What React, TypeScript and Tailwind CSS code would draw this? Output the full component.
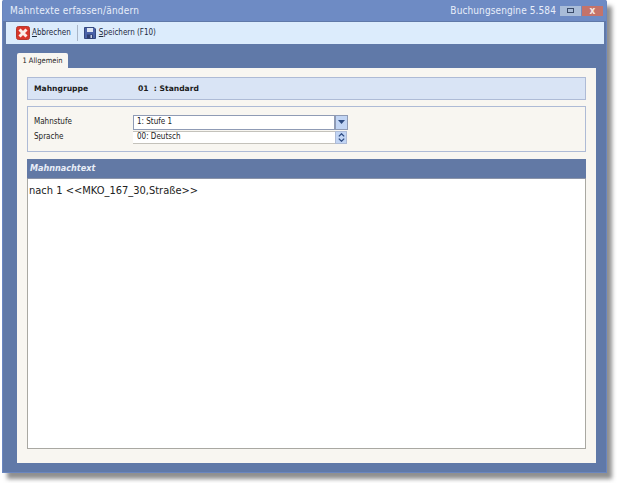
const tahoma = { fontFamily: '"DejaVu Sans Condensed", "DejaVu Sans", sans-serif' };

function CancelIcon() {
  return (
    <svg width="14" height="14" viewBox="0 0 14 14">
      <rect x="0.5" y="0.5" width="13" height="13" rx="2" fill="#d8362a" stroke="#b5382c" />
      <path d="M3.5 3.5 L10.5 10.5 M10.5 3.5 L3.5 10.5" stroke="#fbeee8" strokeWidth="3" />
    </svg>
  );
}

function SaveIcon() {
  return (
    <svg width="12" height="12" viewBox="0 0 12 12">
      <path d="M0.5 0.5 H10 L11.5 2 V11.5 H0.5 Z" fill="#4a62a8" stroke="#34497f" />
      <rect x="3" y="1" width="6" height="4" fill="#dfe6f2" />
      <rect x="3" y="7.5" width="6" height="4" fill="#2f3f70" />
      <rect x="6.5" y="8" width="1.5" height="3" fill="#c5cfe3" />
    </svg>
  );
}

function App() {
  return (
    <div className="w-[617px] h-[483px] bg-white overflow-hidden" style={tahoma}>
      <div className="ml-[2px] w-[605px] h-[473px] flex flex-col bg-[#6079a8] rounded-t-[2px] shadow-[5px_6px_4px_rgba(70,70,70,0.6)] border-x border-b border-[#6a86bf]">
        {/* titlebar */}
        <div className="h-[21px] shrink-0 flex items-center justify-between pl-[7px] pr-[3px] bg-[#6e8bc4] text-[#e8eefa]">
          <span className="text-[10px] font-medium tracking-[0.2px]">Mahntexte erfassen/ändern</span>
          <div className="flex items-center">
            <span className="text-[10px] font-medium tracking-[0.1px] mr-[4px]">Buchungsengine 5.584</span>
            <div className="w-[21px] h-[10px] flex items-center justify-center bg-[#a9bcd8]">
              <div className="w-[7px] h-[5px] border border-[#3a4a68]" />
            </div>
            <div className="w-[21px] h-[10px] ml-[1px] flex items-center justify-center bg-[#c4736a] text-[#f5e8e4] text-[10px] font-bold leading-none">x</div>
          </div>
        </div>
        {/* toolbar */}
        <div className="h-[22px] mt-px ml-[3px] mr-[2px] shrink-0 flex items-center bg-[#dcecfc] text-[#1d2a3c] text-[8px] pl-[10px]">
          <CancelIcon />
          <span className="ml-[2px]"><span className="underline">A</span>bbrechen</span>
          <div className="w-px h-[16px] bg-[#a9b6c8] ml-[6px] mr-[6px]" />
          <SaveIcon />
          <span className="ml-[3px]"><span className="underline">S</span>peichern (F10)</span>
        </div>
        {/* tabs */}
        <div className="flex-1 flex flex-col pl-[14px] pr-[10px] pt-[9px] pb-[9px] min-h-0">
          <div className="h-[15px] w-[51px] shrink-0 flex items-center justify-center bg-[#f8f6f1] rounded-t-[2px] text-[7.5px] text-[#222]">
            1 Allgemein
          </div>
          <div className="flex-1 flex flex-col bg-[#f8f6f1] px-[10px] pt-[9px] pb-[14px] min-h-0">
            <div className="h-[23px] shrink-0 flex items-center bg-[#d9e4f5] border border-[#aebbd6] text-[7.6px] font-bold text-[#1c1c1c] pl-[6px] pt-px" style={{ fontFamily: '"DejaVu Sans", sans-serif' }}>
              <span className="w-[104px]">Mahngruppe</span>
              <span className="whitespace-pre">01  : Standard</span>
            </div>
            <div className="h-[46px] mt-[6px] shrink-0 grid grid-cols-[99px_1fr] gap-y-[1px] content-center border border-[#aebbd6] pl-[6px] text-[8px] text-[#222]">
              <span className="self-center">Mahnstufe</span>
              <div className="flex h-[15px] w-[215px]">
                <div className="flex-1 flex items-center bg-white border border-[#8f9bb5] pl-[3px]">1: Stufe 1</div>
                <div className="w-[13px] flex items-center justify-center bg-[#c2d5f4] border border-[#8f9bb5]">
                  <svg width="7" height="4" viewBox="0 0 7 4"><path d="M0 0 H7 L3.5 4 Z" fill="#2c4a80" /></svg>
                </div>
              </div>
              <span className="self-center">Sprache</span>
              <div className="flex h-[13px] w-[214px]">
                <div className="flex-1 flex items-center bg-white border-b border-[#c4c2bb] border-t pl-[4px]">00: Deutsch</div>
                <div className="w-[12px] flex items-center justify-center bg-[#c2d5f4] border border-[#aebbd6]">
                  <svg width="7" height="9" viewBox="0 0 7 9"><path d="M0.8 3.4 L3.5 0.8 L6.2 3.4 M0.8 5.6 L3.5 8.2 L6.2 5.6" fill="none" stroke="#2c4a80" strokeWidth="1.3" /></svg>
                </div>
              </div>
            </div>
            <div className="mt-[7px] flex-1 flex flex-col min-h-0">
              <div className="h-[20px] shrink-0 flex items-center bg-[#6279a5] border-b border-[#8b94a8] pl-[3px] text-[9px] font-bold italic text-[#e9eef8]">
                Mahnnachtext
              </div>
              <div className="flex-1 bg-white border-x border-b border-[#a9a8a2] pl-[1px] pt-[4px] text-[11px] text-[#222] leading-[16px]">
                nach 1 &lt;&lt;MKO_167_30,Straße&gt;&gt;
              </div>
            </div>
          </div>
        </div>
      </div>
    </div>
  );
}

export default App;
